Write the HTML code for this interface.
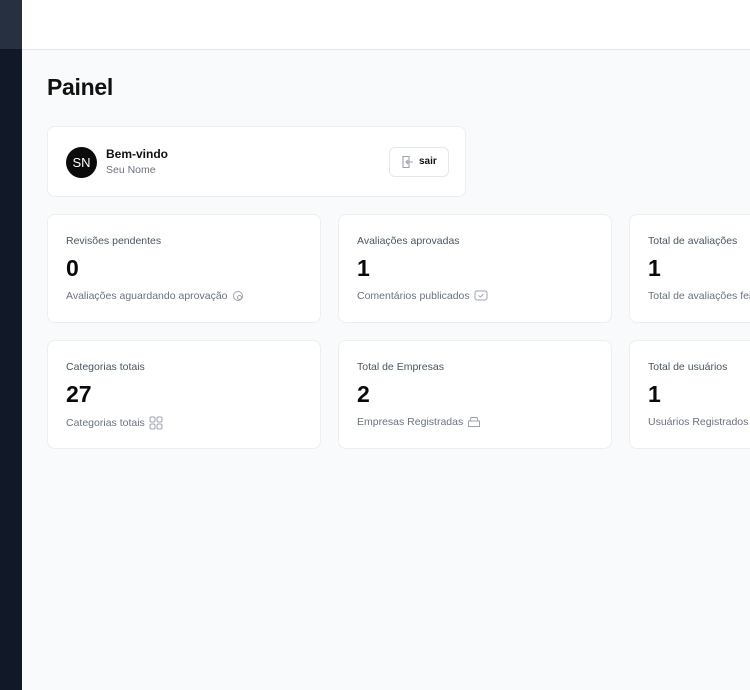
<!DOCTYPE html>
<html><head><meta charset="utf-8"><style>
*{box-sizing:border-box;margin:0;padding:0}
body{width:750px;height:690px;overflow:hidden;background:#f9fafb;font-family:"Liberation Sans",Arial,sans-serif;position:relative;color:#111}
.side{position:absolute;left:0;top:0;width:22px;height:690px;background:#111827}
.side .top{height:49px;background:#263041}
.hdr{position:absolute;left:22px;top:0;right:0;height:50px;background:#fff;border-bottom:1px solid #e5e7eb}
h1{position:absolute;left:47px;top:74px;font-size:23px;font-weight:bold;letter-spacing:-0.3px}
.card{position:absolute;background:#fff;border:1px solid #eceef1;border-radius:8px}
.wel{left:47px;top:126px;width:419px;height:71px}
.av{position:absolute;left:18px;top:20px;width:31px;height:31px;border-radius:50%;background:#0b0b0b;color:#fff;font-size:13px;text-align:center;line-height:31px}
.wt{position:absolute;left:58px;top:20px;font-size:12px;font-weight:bold}
.ws{position:absolute;left:58px;top:37px;font-size:10.5px;color:#6b7280}
.btn{position:absolute;left:341px;top:20px;width:60px;height:30px;border:1px solid #e5e7eb;border-radius:6px;font-size:10px;font-weight:bold;line-height:28px;padding-left:29px}
.btn svg{position:absolute;left:10px;top:7px}
.stat{width:274px;height:109px}
.l{position:absolute;left:18px;top:20px;font-size:10.5px;color:#4b5563}
.n{position:absolute;left:18px;top:40px;font-size:23px;font-weight:bold;color:#0a0a0a}
.s{position:absolute;left:18px;top:75px;font-size:10.5px;color:#6b7280;white-space:nowrap;display:flex;align-items:center;gap:4px}
</style></head><body>
<div class="side"><div class="top"></div></div>
<div class="hdr"></div>
<h1>Painel</h1>
<div class="card wel"><div class="av">SN</div><div class="wt">Bem-vindo</div><div class="ws">Seu Nome</div>
<div class="btn"><svg width="14" height="14" viewBox="0 0 14 14" fill="none" stroke="#9ca3af" stroke-width="1.1"><path d="M3 1.5h6v11H3zM13 7H6M8 5L6 7l2 2"/></svg>sair</div></div>

<div class="card stat" style="left:47px;top:214px"><div class="l">Revisões pendentes</div><div class="n">0</div><div class="s">Avaliações aguardando aprovação <svg width="12" height="12" viewBox="0 0 12 12" fill="none" stroke="#9ca3af"><circle cx="6" cy="6" r="4.5"/><circle cx="7.5" cy="7.5" r="2"/></svg></div></div>
<div class="card stat" style="left:338px;top:214px"><div class="l">Avaliações aprovadas</div><div class="n">1</div><div class="s">Comentários publicados <svg width="14" height="12" viewBox="0 0 14 12" fill="none" stroke="#9ca3af"><rect x="1" y="1" width="12" height="9" rx="2"/><path d="M4.5 5.5l2 1.5 3-3"/></svg></div></div>
<div class="card stat" style="left:629px;top:214px"><div class="l">Total de avaliações</div><div class="n">1</div><div class="s">Total de avaliações feitas</div></div>

<div class="card stat" style="left:47px;top:340px"><div class="l">Categorias totais</div><div class="n">27</div><div class="s">Categorias totais <svg width="14" height="14" viewBox="0 0 14 14" fill="none" stroke="#9ca3af"><rect x="1" y="1" width="5" height="5" rx="1.5"/><rect x="8" y="1" width="5" height="5" rx="1.5"/><rect x="1" y="8" width="5" height="5" rx="1.5"/><rect x="8" y="8" width="5" height="5" rx="1.5"/></svg></div></div>
<div class="card stat" style="left:338px;top:340px"><div class="l">Total de Empresas</div><div class="n">2</div><div class="s">Empresas Registradas <svg width="14" height="12" viewBox="0 0 14 12" fill="none" stroke="#9ca3af"><path d="M1.5 5h11v5.5h-11zM3 5l1-3.5h6L11 5"/></svg></div></div>
<div class="card stat" style="left:629px;top:340px"><div class="l">Total de usuários</div><div class="n">1</div><div class="s">Usuários Registrados</div></div>
</body></html>
